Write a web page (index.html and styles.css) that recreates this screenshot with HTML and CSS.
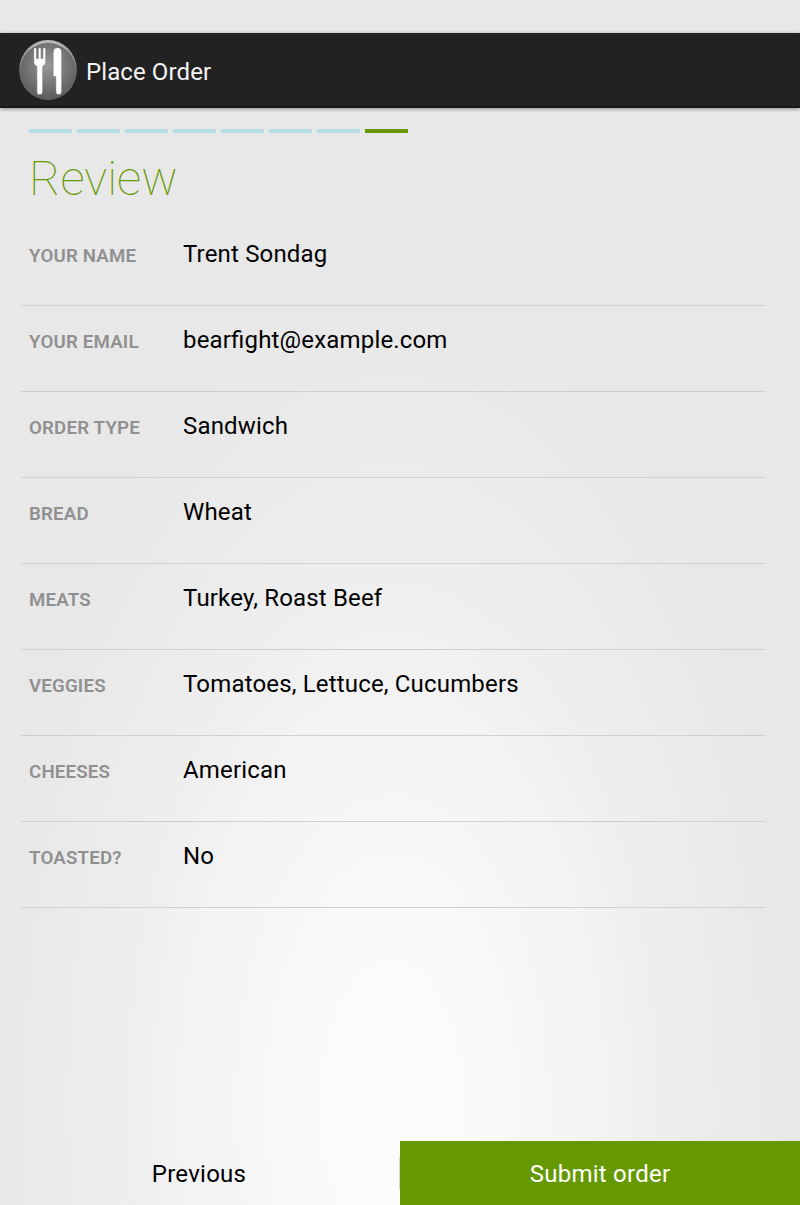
FILE: index.html
```html
<!DOCTYPE html>
<html lang="en">
<head>
<meta charset="utf-8">
<title>Place Order</title>
<link rel="stylesheet" href="styles.css">
</head>
<body>
<header class="bar">
<svg class="logo" width="60" height="62" viewBox="18 39 60 62">
<defs>
<radialGradient id="face" cx=".5" cy=".4" r=".6"><stop offset="0" stop-color="#999"/><stop offset="1" stop-color="#5c5c5c"/></radialGradient>
<linearGradient id="rim" x1="0" y1="0" x2="0" y2="1"><stop offset="0" stop-color="#bbb"/><stop offset=".5" stop-color="#777"/><stop offset="1" stop-color="#555"/></linearGradient>
</defs>
<ellipse cx="48" cy="70" rx="28.8" ry="30" fill="url(#rim)"/>
<ellipse cx="48" cy="71.3" rx="28" ry="28.2" fill="url(#face)"/>
<path fill="#fff" stroke="#fff" stroke-opacity=".35" stroke-width=".8" d="M34.2 48.5q.9-.8 1.8 0V59h2.8V48.5q.9-.8 1.8 0V59h2.8V48.5q.9-.8 1.8 0V62q0 3-3 4V92q0 2.3-2.5 2.3T37.3 92V66q-3.1-1-3.1-4zM53.7 52q0-4 3.8-4t3.7 4v40q0 2.3-2.5 2.3T56.2 92V76h-2.5z"/>
</svg>
<h1 class="title">Place Order</h1>
</header>
<main class="content">
<div class="steps"><i></i><i></i><i></i><i></i><i></i><i></i><i></i><i class="current"></i></div>
<h2 class="heading">Review</h2>
<dl class="list">
<div class="row"><dt>YOUR NAME</dt><dd>Trent Sondag</dd></div>
<div class="row"><dt>YOUR EMAIL</dt><dd>bearfight@example.com</dd></div>
<div class="row"><dt>ORDER TYPE</dt><dd>Sandwich</dd></div>
<div class="row"><dt>BREAD</dt><dd>Wheat</dd></div>
<div class="row"><dt>MEATS</dt><dd>Turkey, Roast Beef</dd></div>
<div class="row"><dt>VEGGIES</dt><dd>Tomatoes, Lettuce, Cucumbers</dd></div>
<div class="row"><dt>CHEESES</dt><dd>American</dd></div>
<div class="row"><dt>TOASTED?</dt><dd>No</dd></div>
</dl>
</main>
<footer class="actions"><button class="btn previous">Previous</button><button class="btn submit">Submit order</button></footer>
</body>
</html>
```
FILE: styles.css
```css
* { box-sizing: border-box; margin: 0; padding: 0; }
body {
  height: 1205px;
  padding-top: 33px;
  display: flex;
  flex-direction: column;
  overflow: hidden;
  font-family: Roboto, sans-serif;
  color: #000;
  background: radial-gradient(ellipse 405px 800px at 392px 1105px, #fcfcfc 0%, #fbfbfb 12%, #f9f9f9 25%, #f3f3f3 50%, #ececec 75%, #e8e8e8 100%);
}
.bar {
  height: 75px;
  flex: none;
  display: flex;
  align-items: center;
  padding-left: 18px;
  background: #222;
  border-bottom: 2px solid #181818;
  box-shadow: 0 1px 4px rgba(0, 0, 0, .4);
}
.title { margin-left: 8px; font-size: 24px; font-weight: 400; letter-spacing: .1px; color: #f3f3f3; padding-top: 4px; }
.content { flex: 1; padding: 21px 34px 0 21px; }
.steps { display: flex; gap: 5px; padding-left: 8px; }
.steps i { width: 43px; height: 4px; background: #b5dbe8; }
.steps .current { background: #690; }
.heading { height: 87px; padding: 18px 0 0 8px; font-size: 48px; line-height: 56px; font-weight: 100; color: #690; }
.row { height: 86px; display: flex; align-items: baseline; padding: 20px 0 0 8px; border-bottom: 1px solid #d0d0d0; }
dt { width: 154px; font-size: 18.7px; font-weight: 600; letter-spacing: .18px; color: #909090; }
dd { font-size: 24px; line-height: 28px; letter-spacing: .17px; font-feature-settings: "liga" 1; }
.actions { display: flex; height: 64px; }
.btn { flex: none; width: 50%; border: 0; background: none; font: 24px Roboto, sans-serif; letter-spacing: .25px; padding-top: 2px; color: #000; }
.previous {
  padding-right: 2px;
  background: linear-gradient(#d5d5d5, #d5d5d5) right 16px / 1px 32px no-repeat;
}
.submit { background: #690; color: #fff; }
```
